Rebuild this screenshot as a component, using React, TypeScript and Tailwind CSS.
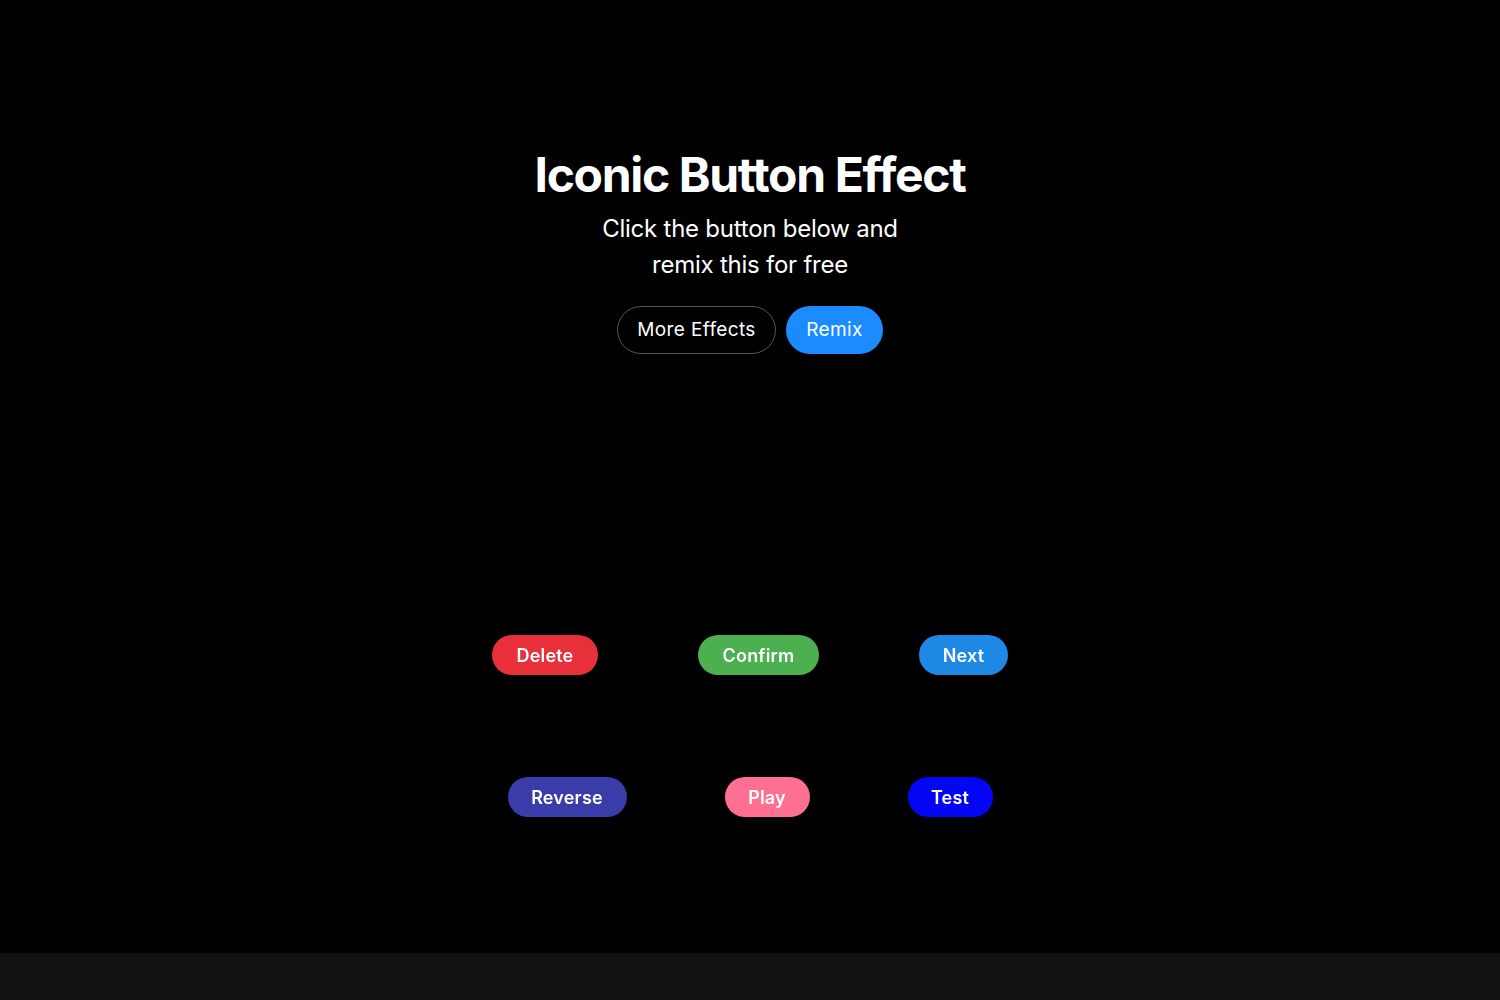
import React from "react";

// --------------------
// Data
// --------------------
type Effect = { label: string; className: string };

const rowOne: Effect[] = [
  { label: "Delete", className: "bg-[#e8303a] w-[106px]" },
  { label: "Confirm", className: "bg-[#4caf50] w-[121px]" },
  { label: "Next", className: "bg-[#1e88e5] w-[89px]" },
];

const rowTwo: Effect[] = [
  { label: "Reverse", className: "bg-[#3a3caa] w-[119px]" },
  { label: "Play", className: "bg-[#ff6f92] w-[85px]" },
  { label: "Test", className: "bg-[#0505f5] w-[85px]" },
];

function EffectButton({ effect }: { effect: Effect }) {
  return (
    <button
      className={`h-10 rounded-full text-white text-[18px] font-semibold tracking-[0.01em] flex items-center justify-center blur-[0.4px] ${effect.className}`}
    >
      {effect.label}
    </button>
  );
}

// --------------------
// Component
// --------------------
export default function App() {
  return (
    <div
      className="min-h-screen bg-[#111111] flex flex-col"
      style={{ fontFamily: "Inter, 'Noto Sans', sans-serif" }}
    >
      <main className="h-[953px] bg-black flex flex-col items-center">
        {/* Header */}
        <h1 className="mt-[146px] text-white text-[48px] leading-[58px] font-bold tracking-[-0.028em]">
          Iconic Button Effect
        </h1>
        <p className="mt-[7px] w-[320px] text-center text-white text-[24px] leading-[36px] tracking-[-0.01em]">
          Click the button below and remix this for free
        </p>

        {/* Actions */}
        <div className="mt-[23px] flex gap-[10px]">
          <button className="h-12 w-[159px] rounded-full border border-[#555] text-white text-[19px] tracking-[0.02em]">
            More Effects
          </button>
          <button className="h-12 w-[97px] rounded-full bg-[#1a8cff] text-white text-[19px] tracking-[0.02em]">
            Remix
          </button>
        </div>

        {/* Effect buttons */}
        <div className="mt-[281px] flex flex-col items-center gap-[102px]">
          <div className="flex gap-[100px]">
            {rowOne.map((e) => (
              <EffectButton key={e.label} effect={e} />
            ))}
          </div>
          <div className="flex gap-[98px]">
            {rowTwo.map((e) => (
              <EffectButton key={e.label} effect={e} />
            ))}
          </div>
        </div>
      </main>
    </div>
  );
}
